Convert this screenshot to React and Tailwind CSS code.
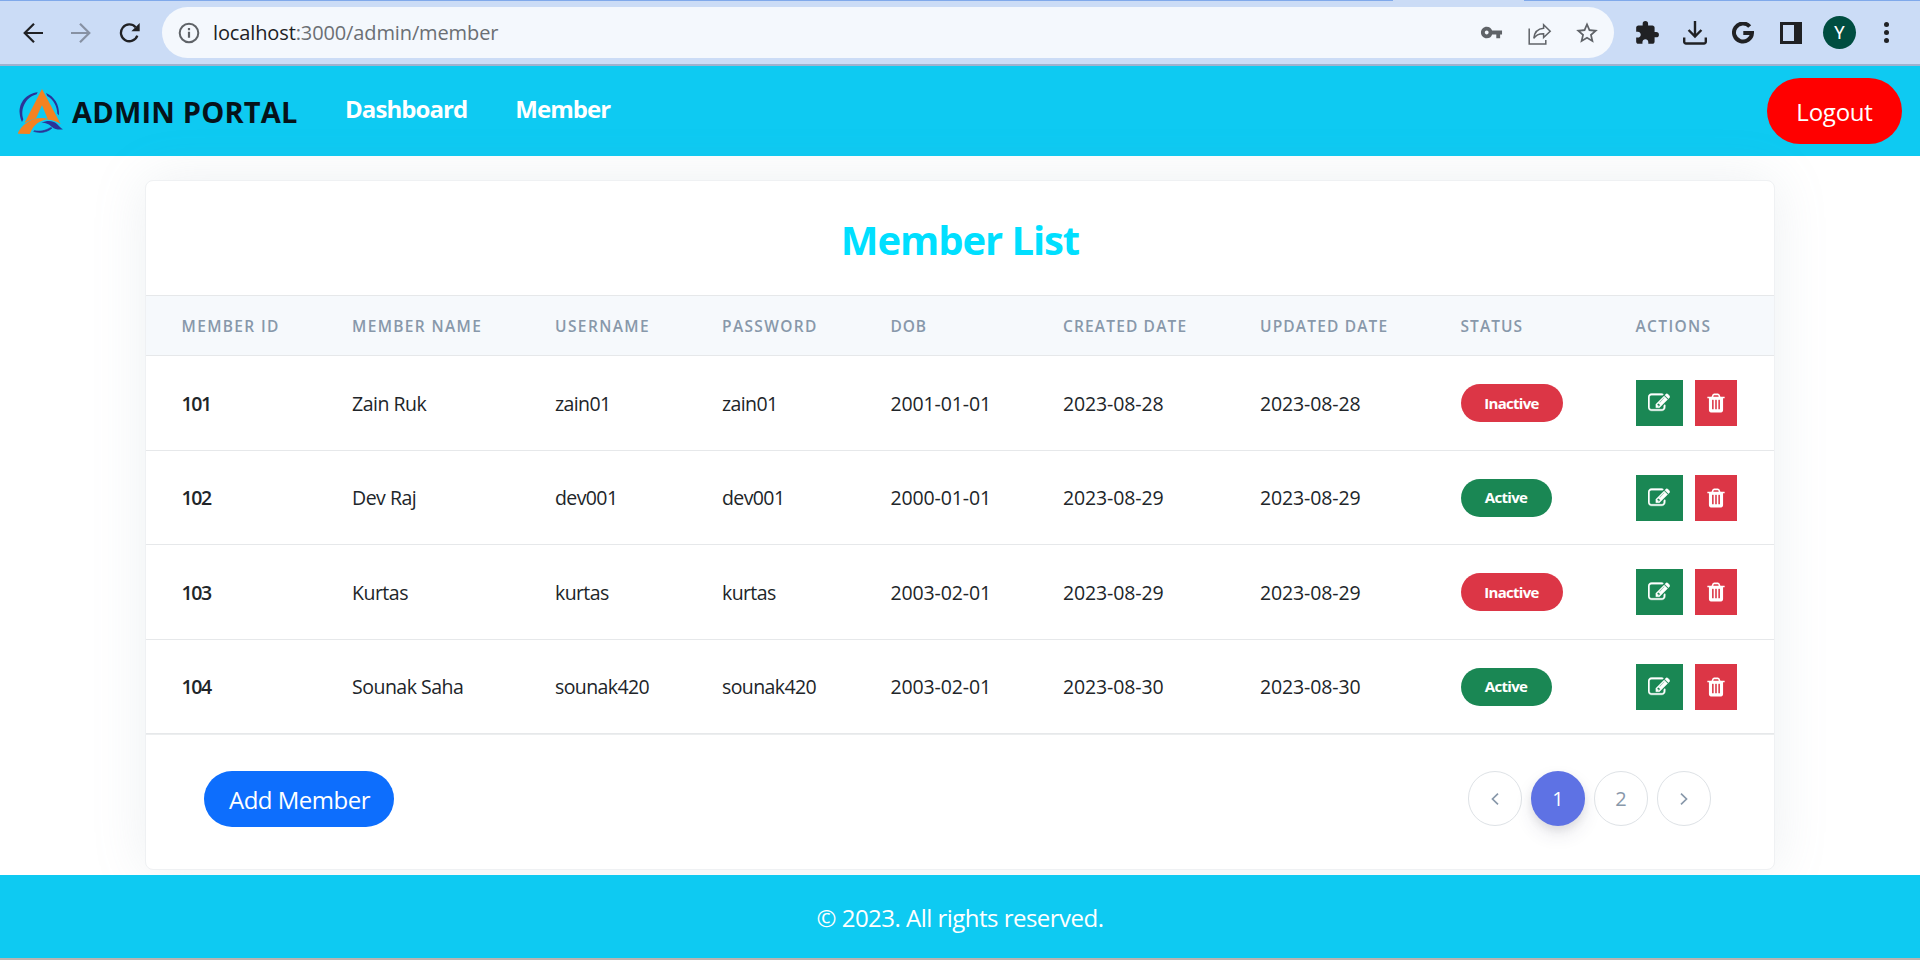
import { MdVpnKey, MdStarBorder, MdExtension } from 'react-icons/md';

const members = [
  { id: '101', name: 'Zain Ruk', user: 'zain01', pass: 'zain01', dob: '2001-01-01', created: '2023-08-28', updated: '2023-08-28', active: false, height: 'h-[95px]' },
  { id: '102', name: 'Dev Raj', user: 'dev001', pass: 'dev001', dob: '2000-01-01', created: '2023-08-29', updated: '2023-08-29', active: true, height: 'h-[94px]' },
  { id: '103', name: 'Kurtas', user: 'kurtas', pass: 'kurtas', dob: '2003-02-01', created: '2023-08-29', updated: '2023-08-29', active: false, height: 'h-[95px]' },
  { id: '104', name: 'Sounak Saha', user: 'sounak420', pass: 'sounak420', dob: '2003-02-01', created: '2023-08-30', updated: '2023-08-30', active: true, height: 'h-[94px]' },
];

const headings = [
  { label: 'Member ID', tracking: 'tracking-[1.35px]' },
  { label: 'Member Name', tracking: 'tracking-[1.35px]' },
  { label: 'Username', tracking: 'tracking-[1.4px]' },
  { label: 'Password', tracking: 'tracking-[1.35px]' },
  { label: 'DOB', tracking: 'tracking-[0.9px]' },
  { label: 'Created Date', tracking: 'tracking-[1.15px]' },
  { label: 'Updated Date', tracking: 'tracking-[1.15px]' },
  { label: 'Status', tracking: 'tracking-[1.05px]' },
  { label: 'Actions', tracking: 'tracking-[1.35px]' },
];

const columns = 'grid grid-cols-[170.5px_203px_167px_168.5px_172.5px_197px_200.5px_175px_1fr] items-center pl-[35.5px]';

function Logo() {
  return (
    <svg viewBox="54 57 135 135" className="h-[45px] w-[45px]">
      <path d="M113 67 C 80 70 56 98 59 130 C 60 141 62 149 66 156 L70 148 C 60 118 76 82 110 73 Z" fill="#2b3398" />
      <path d="M138 69 C 162 79 179 103 177 136 L172 131 C 171 108 161 90 142 78 Z" fill="#2b3398" />
      <path d="M101 184 C 118 190 142 188 156 174 L151 173 C 136 183 118 185 103 182 Z" fill="#2b3398" stroke="#2b3398" strokeWidth="2" />
      <path d="M124 158 C 142 151 158 151 171 162 C 178 170 184 175 189 178 C 177 180 164 178 156 171 C 148 163 140 158 124 158 Z" fill="#2b3398" />
      <path d="M126 57 L182 162 C 170 154 158 149 144 149 L126 106 L108 145 C 96 148 84 153 73 160 Z" fill="#f58220" />
      <path d="M53 191 C 64 163 100 134 148 147 C 118 151 102 162 89 192 Z" fill="#f58220" />
    </svg>
  );
}

function BackIcon() {
  return (
    <svg viewBox="0 0 20 20" className="h-5 w-5" fill="none" stroke="currentColor" strokeWidth="2.2">
      <path d="M20 10H2M11 0.8L1.7 10l9.3 9.2" />
    </svg>
  );
}

function ReloadIcon() {
  return (
    <svg viewBox="0 0 21 20" className="h-5 w-[21px]">
      <path d="M16.6 4.2A8.4 8.4 0 1 0 18.3 12.6" fill="none" stroke="#202124" strokeWidth="2.3" />
      <path d="M20.7 0v8.3h-8.3z" fill="#202124" />
    </svg>
  );
}

function InfoIcon() {
  return (
    <svg viewBox="0 0 22 22" className="h-[22px] w-[22px]">
      <circle cx="11" cy="11" r="9.3" fill="none" stroke="#5f6368" strokeWidth="2" />
      <path d="M9.9 9.8h2.2v6H9.9zM9.9 6h2.2v2.3H9.9z" fill="#5f6368" />
    </svg>
  );
}

function ShareIcon() {
  return (
    <svg viewBox="0 0 24 22" className="h-[22px] w-6" fill="none" stroke="#5f6368" strokeWidth="1.5">
      <path d="M1.2 5.5v15.4h16.6v-4" />
      <path d="M15.6 1.8l6.6 6.4-6.6 6.4v-3.9c-4.4-.1-7.6 1.1-9.8 4.6.6-5.6 3.8-9.5 9.8-10z" strokeLinejoin="miter" />
    </svg>
  );
}

function DownloadIcon() {
  return (
    <svg viewBox="0 0 24 24" className="h-6 w-6" fill="none" stroke="#202124" strokeWidth="2.4">
      <path d="M12 0v15M5.6 9l6.4 6.6 6.4-6.6" />
      <path d="M1.2 16.5v4.2a1.8 1.8 0 0 0 1.8 1.8h18a1.8 1.8 0 0 0 1.8-1.8v-4.2" />
    </svg>
  );
}

function GoogleIcon() {
  return (
    <svg viewBox="0 0 22 22" className="h-[22px] w-[22px]" fill="none" stroke="#202124" strokeWidth="4">
      <path d="M17.7 4.5A9 9 0 1 0 20 11H11.3" />
    </svg>
  );
}

function EditIcon() {
  return (
    <svg viewBox="0 0 1792 1792" className="h-[22px] w-[22px]" fill="#fff" stroke="#fff" strokeWidth="30">
      <path d="M888 1184l116-116-152-152-116 116v56h96v96h56zm440-720q-16-16-33 1l-350 350q-17 17-1 33t33-1l350-350q17-17 1-33zm80 594v190q0 119-84.5 203.5t-203.5 84.5h-832q-119 0-203.5-84.5t-84.5-203.5v-832q0-119 84.5-203.5t203.5-84.5h832q63 0 117 25 15 7 18 23 3 17-9 29l-49 49q-14 14-32 8-23-6-45-6h-832q-66 0-113 47t-47 113v832q0 66 47 113t113 47h832q66 0 113-47t47-113v-126q0-13 9-22l64-64q15-15 35-7t20 29zm-96-738l288 288-672 672h-288v-288zm444 132l-92 92-288-288 92-92q28-28 68-28t68 28l152 152q28 28 28 68t-28 68z" />
    </svg>
  );
}

function TrashIcon() {
  return (
    <svg viewBox="0 0 1792 1792" className="h-[22px] w-[22px]" fill="#fff">
      <path d="M704 1376v-704q0-14-9-23t-23-9h-64q-14 0-23 9t-9 23v704q0 14 9 23t23 9h64q14 0 23-9t9-23zm256 0v-704q0-14-9-23t-23-9h-64q-14 0-23 9t-9 23v704q0 14 9 23t23 9h64q14 0 23-9t9-23zm256 0v-704q0-14-9-23t-23-9h-64q-14 0-23 9t-9 23v704q0 14 9 23t23 9h64q14 0 23-9t9-23zm-544-992h448l-48-117q-7-9-17-11h-317q-10 2-17 11zm928 32v64q0 14-9 23t-23 9h-96v948q0 83-47 143.5t-113 60.5h-832q-66 0-113-58.5t-47-141.5v-952h-96q-14 0-23-9t-9-23v-64q0-14 9-23t23-9h309l70-167q15-37 54-63t79-26h320q40 0 79 26t54 63l70 167h309q14 0 23 9t9 23z" />
    </svg>
  );
}

function BrowserBar() {
  return (
    <div className="flex h-[66px] shrink-0 flex-col border-b-2 border-[#9fb1cf] bg-[#cbdcf6]">
      <div className="flex h-px justify-between">
        <span className="w-[1393px] bg-[#80a9ea]" />
        <span className="w-[396px] bg-[#80a9ea]" />
      </div>
      <div className="flex h-[63px] items-center">
        <div className="flex w-[162px] items-center pl-[23px] text-[#202124]">
          <BackIcon />
          <span className="ml-7 rotate-180 text-[#8791a3]"><BackIcon /></span>
          <span className="ml-7"><ReloadIcon /></span>
        </div>
        <div className="flex h-[51px] w-[1452px] items-center rounded-full bg-[#f4f8fd] pl-4">
          <InfoIcon />
          <p className="ml-[13px] text-xl tracking-[-0.12px] text-[#6b6f74]">
            <span className="text-[#202124]">localhost</span>:3000/admin/member
          </p>
          <div className="ml-auto flex items-center pr-[14px] text-[#5f6368]">
            <MdVpnKey size={23} />
            <span className="ml-[25px] mt-0.5"><ShareIcon /></span>
            <MdStarBorder size={26} className="ml-[22px]" />
          </div>
        </div>
        <div className="ml-5 flex flex-1 items-center text-[#202124]">
          <MdExtension size={26} />
          <span className="ml-[23px]"><DownloadIcon /></span>
          <span className="ml-[25px]"><GoogleIcon /></span>
          <span className="ml-[26px] h-[22px] w-[22px] border-[3px] border-r-8 border-[#202124]" />
          <span className="ml-[21px] flex h-[33px] w-[33px] items-center justify-center rounded-full bg-[#004d40] font-['Roboto',sans-serif] text-lg text-white">Y</span>
          <span className="ml-7 flex flex-col gap-[3px]">
            <i className="h-[5px] w-[5px] rounded-full bg-[#202124]" />
            <i className="h-[5px] w-[5px] rounded-full bg-[#202124]" />
            <i className="h-[5px] w-[5px] rounded-full bg-[#202124]" />
          </span>
        </div>
      </div>
    </div>
  );
}

function NavBar() {
  return (
    <nav className="flex h-[90px] shrink-0 items-center bg-[#0ecaf2] pl-[18px] pr-[18px]">
      <Logo />
      <span className="ml-[9px] mt-px w-[226px] text-[29px] font-bold leading-none tracking-[0.2px] whitespace-nowrap text-[#06131a]">ADMIN PORTAL</span>
      <a className="mb-1 ml-[47px] text-2xl leading-none font-bold tracking-[-0.93px] text-white">Dashboard</a>
      <a className="mb-1 ml-[48px] text-2xl leading-none font-bold tracking-[-0.95px] text-white">Member</a>
      <button className="ml-auto flex h-[66px] w-[135px] items-center justify-center rounded-full bg-[#ff0000] pt-px text-2xl leading-none tracking-[-0.23px] text-white">Logout</button>
    </nav>
  );
}

function MemberRow({ m }) {
  return (
    <div className={`${columns} ${m.height} border-b border-[#e6e8ea] text-[19.5px] text-[#212529]`}>
      <span className="pt-px font-semibold tracking-[-1.4px]">{m.id}</span>
      <span className="pt-px tracking-[-0.5px]">{m.name}</span>
      <span className="pt-px tracking-[-0.6px]">{m.user}</span>
      <span className="pt-px tracking-[-0.6px]">{m.pass}</span>
      <span className="pt-px tracking-[-0.12px]">{m.dob}</span>
      <span className="pt-px tracking-[-0.12px]">{m.created}</span>
      <span className="pt-px tracking-[-0.12px]">{m.updated}</span>
      <span>
        {m.active ? (
          <b className="flex h-[38px] w-[91px] items-center justify-center rounded-full bg-[#1a8754] text-[15px] font-bold tracking-[-0.7px] text-white">Active</b>
        ) : (
          <b className="flex h-[38px] w-[102px] items-center justify-center rounded-full bg-[#dc3646] text-[15px] font-bold tracking-[-0.7px] text-white">Inactive</b>
        )}
      </span>
      <span className="flex gap-3">
        <button className="flex h-[46px] w-[47px] items-center justify-center bg-[#1a8754]"><EditIcon /></button>
        <button className="flex h-[46px] w-[42px] items-center justify-center bg-[#dc3646]"><TrashIcon /></button>
      </span>
    </div>
  );
}

function PageButton({ children }) {
  return (
    <button className="flex h-[55px] w-[54px] items-center justify-center rounded-full border border-[#dee2e6] text-xl text-[#8898aa]">
      {children}
    </button>
  );
}

function Pagination() {
  return (
    <div className="flex gap-[9px]">
      <PageButton>
        <svg viewBox="0 0 8 12" className="h-3 w-2" fill="none" stroke="currentColor" strokeWidth="1.7"><path d="M7 0.7L1.5 6 7 11.3" /></svg>
      </PageButton>
      <button className="flex h-[55px] w-[54px] items-center justify-center rounded-full bg-[#5e72e4] text-xl text-white shadow-[0_9px_18px_rgba(50,50,93,0.1),0_4px_8px_rgba(0,0,0,0.08)]">1</button>
      <PageButton>2</PageButton>
      <PageButton>
        <svg viewBox="0 0 8 12" className="h-3 w-2" fill="none" stroke="currentColor" strokeWidth="1.7"><path d="M1 0.7L6.5 6 1 11.3" /></svg>
      </PageButton>
    </div>
  );
}

export default function App() {
  return (
    <div className="flex h-[960px] w-[1920px] flex-col overflow-hidden bg-white font-['Open_Sans','Noto_Sans',sans-serif]">
      <BrowserBar />
      <NavBar />
      <main className="flex h-[719px] shrink-0 justify-center pt-6">
        <section className="flex h-[690px] w-[1630px] flex-col rounded-lg border border-[#eff1f3] bg-white shadow-[0_0_54px_rgba(136,152,170,0.15)]">
          <h1 className="flex h-[114px] shrink-0 items-center justify-center pt-[3px] text-[40px] leading-none font-bold tracking-[-1.08px] text-[#00dfff]">Member List</h1>
          <div className={`${columns} h-[61px] shrink-0 border-y border-[#e6e8ea] bg-[#f6f9fc] pt-[3px] text-[15.5px] font-semibold text-[#8898aa] uppercase`}>
            {headings.map((h) => (
              <span key={h.label} className={h.tracking}>{h.label}</span>
            ))}
          </div>
          {members.map((m) => <MemberRow key={m.id} m={m} />)}
          <div className="flex flex-1 items-start justify-between border-t border-[#eceeef] pt-9 pr-[63px] pl-[58px]">
            <button className="flex h-14 w-[190px] items-center justify-center rounded-full bg-[#0d6efd] pt-px pl-px text-2xl leading-none tracking-[-0.5px] text-white">Add Member</button>
            <Pagination />
          </div>
        </section>
      </main>
      <footer className="relative flex h-[83px] shrink-0 items-center justify-center bg-[#0ecaf2] pt-[3px] text-2xl leading-none tracking-[-0.52px] text-white">
        © 2023. All rights reserved.
      </footer>
      <div className="relative h-0.5 shrink-0 bg-[#bbb3b0]" />
    </div>
  );
}
